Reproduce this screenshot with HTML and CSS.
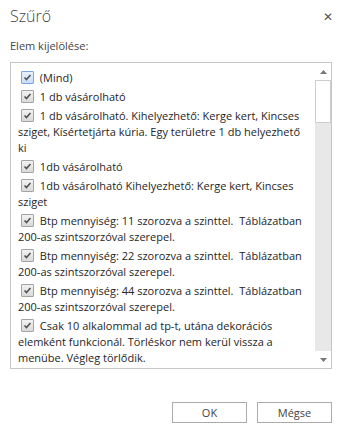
FILE: index.html
```html
<!DOCTYPE html>
<html lang="hu">
<head>
  <meta charset="UTF-8">
  <title>Szűrő</title>
  <link rel="stylesheet" href="styles.css">
</head>
<body>
  <div class="dialog">
    <div class="dialog-header">
      <h1>Szűrő</h1>
      <span class="close">&#x2715;</span>
    </div>
    <div class="field-label">Elem kijelölése:</div>

    <div class="listbox">
      <div class="list-items">
        <div class="item"><span class="check focused"><svg viewBox="0 0 13 13"><path d="M3 6.5 L5.3 9 L10 3.5" /></svg></span> <span>(Mind)</span></div>
        <div class="item"><span class="check"><svg viewBox="0 0 13 13"><path d="M3 6.5 L5.3 9 L10 3.5" /></svg></span> <span>1 db vásárolható</span></div>
        <div class="item"><span class="check"><svg viewBox="0 0 13 13"><path d="M3 6.5 L5.3 9 L10 3.5" /></svg></span> <span>1 db vásárolható. Kihelyezhető: Kerge kert, Kincses sziget, Kísértetjárta kúria. Egy területre 1 db helyezhető ki</span></div>
        <div class="item"><span class="check"><svg viewBox="0 0 13 13"><path d="M3 6.5 L5.3 9 L10 3.5" /></svg></span> <span>1db vásárolható</span></div>
        <div class="item"><span class="check"><svg viewBox="0 0 13 13"><path d="M3 6.5 L5.3 9 L10 3.5" /></svg></span> <span>1db vásárolható Kihelyezhető: Kerge kert, Kincses sziget</span></div>
        <div class="item"><span class="check"><svg viewBox="0 0 13 13"><path d="M3 6.5 L5.3 9 L10 3.5" /></svg></span> <span>Btp mennyiség: 11 szorozva a szinttel.&nbsp; Táblázatban 200-as szintszorzóval szerepel.</span></div>
        <div class="item"><span class="check"><svg viewBox="0 0 13 13"><path d="M3 6.5 L5.3 9 L10 3.5" /></svg></span> <span>Btp mennyiség: 22 szorozva a szinttel.&nbsp; Táblázatban 200-as szintszorzóval szerepel.</span></div>
        <div class="item"><span class="check"><svg viewBox="0 0 13 13"><path d="M3 6.5 L5.3 9 L10 3.5" /></svg></span> <span>Btp mennyiség: 44 szorozva a szinttel.&nbsp; Táblázatban 200-as szintszorzóval szerepel.</span></div>
        <div class="item"><span class="check"><svg viewBox="0 0 13 13"><path d="M3 6.5 L5.3 9 L10 3.5" /></svg></span> <span>Csak 10 alkalommal ad tp-t, utána dekorációs elemként funkcionál. Törléskor nem kerül vissza a menübe. Végleg törlődik.</span></div>
        <div class="item"><span class="check"><svg viewBox="0 0 13 13"><path d="M3 6.5 L5.3 9 L10 3.5" /></svg></span> <span>Btp mennyiség: 88 szorozva a szinttel.</span></div>
      </div>
      <div class="scrollbar">
        <div class="sb-btn"><svg viewBox="0 0 7 4"><path d="M0 4 L3.5 0 L7 4 Z" /></svg></div>
        <div class="sb-thumb"></div>
        <div class="sb-track"></div>
        <div class="sb-btn"><svg viewBox="0 0 7 4"><path d="M0 0 L7 0 L3.5 4 Z" /></svg></div>
      </div>
    </div>

    <div class="dialog-footer">
      <button>OK</button>
      <button>Mégse</button>
    </div>
  </div>
</body>
</html>
```

FILE: styles.css
```css
/* Alap */
body {
  margin: 0;
  background-color: #fff;
  font-family: "Open Sans", "Noto Sans", sans-serif;
  color: #262626;
}
.dialog {
  width: 343px;
  height: 437px;
  padding: 0 11px 0 10px;
  box-sizing: border-box;
}
/* Fejléc */
.dialog-header {
  display: flex;
  justify-content: space-between;
  align-items: flex-start;
  padding-top: 5px;
}
.dialog-header h1 {
  margin: 0;
  font-size: 16px;
  font-weight: 300;
  line-height: 22px;
  color: #444;
}
.close {
  font-size: 12px;
  line-height: 12px;
  color: #555;
  margin-top: 6px;
  margin-right: -1px;
}
.field-label {
  margin-top: 11px;
  font-size: 11px;
  line-height: 16px;
  color: #444;
}
/* Lista */
.listbox {
  margin-top: 8px;
  height: 307px;
  border: 1px solid #c6c6c6;
  box-sizing: border-box;
  display: flex;
}
.list-items {
  flex: 1;
  overflow: hidden;
  padding: 5px 4px 0 7px;
  font-size: 11px;
  line-height: 16px;
}
.item {
  padding: 1.5px 0;
}
.check {
  display: inline-block;
  width: 11px;
  height: 11px;
  margin: 0 3px 0 3px;
  border: 1px solid #a3a3a3;
  border-radius: 1px;
  background: linear-gradient(#f2f2f2, #dadada);
  vertical-align: -2px;
}
.check.focused {
  border-color: #7aa7dd;
  background: linear-gradient(#e8f1fc, #c9dff7);
}
.check svg {
  display: block;
  width: 11px;
  height: 11px;
}
.check path {
  fill: none;
  stroke: #505050;
  stroke-width: 1.8;
}
/* Görgetősáv */
.scrollbar {
  width: 16px;
  display: flex;
  flex-direction: column;
  background-color: #e8e8e8;
}
.sb-btn {
  height: 17px;
  background-color: #fff;
  display: flex;
  align-items: center;
  justify-content: center;
}
.sb-btn svg {
  width: 7px;
  height: 4px;
  fill: #777;
}
.sb-thumb {
  height: 43px;
  background-color: #fff;
  border: 1px solid #cdcdcd;
  box-sizing: border-box;
}
.sb-track {
  flex: 1;
}
/* Gombok */
.dialog-footer {
  display: flex;
  justify-content: flex-end;
  gap: 10px;
  margin-top: 33px;
}
.dialog-footer button {
  width: 75px;
  height: 21px;
  background-color: #fff;
  border: 1px solid #ababab;
  font-family: "Open Sans", "Noto Sans", sans-serif;
  font-size: 11px;
  color: #444;
  padding: 0;
}
```
